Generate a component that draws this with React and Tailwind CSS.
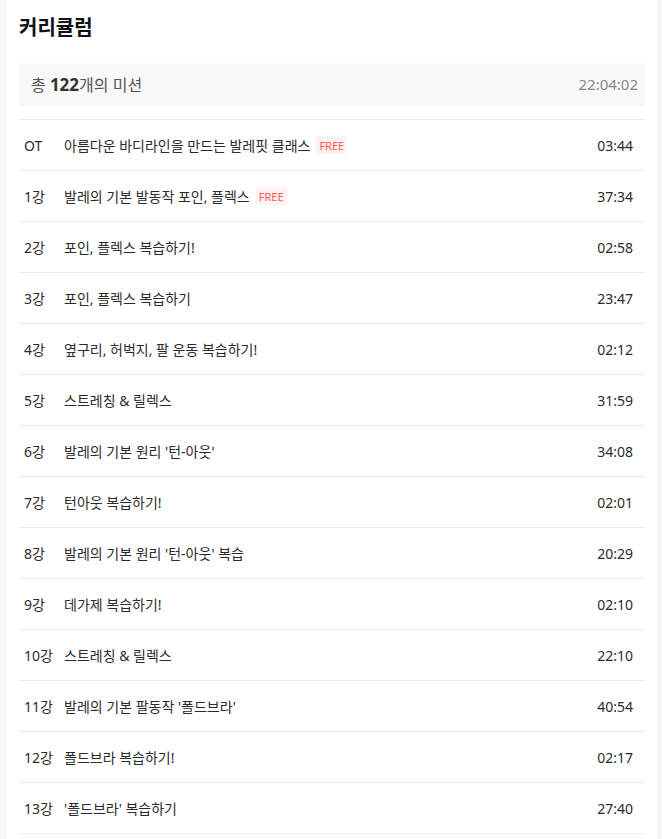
const lessons = [
  { no: 'OT', title: '아름다운 바디라인을 만드는 발레핏 클래스', free: true, time: '03:44' },
  { no: '1강', title: '발레의 기본 발동작 포인, 플렉스', free: true, time: '37:34' },
  { no: '2강', title: '포인, 플렉스 복습하기!', time: '02:58' },
  { no: '3강', title: '포인, 플렉스 복습하기', time: '23:47' },
  { no: '4강', title: '옆구리, 허벅지, 팔 운동 복습하기!', time: '02:12' },
  { no: '5강', title: '스트레칭 & 릴렉스', time: '31:59' },
  { no: '6강', title: "발레의 기본 원리 '턴-아웃'", time: '34:08' },
  { no: '7강', title: '턴아웃 복습하기!', time: '02:01' },
  { no: '8강', title: "발레의 기본 원리 '턴-아웃' 복습", time: '20:29' },
  { no: '9강', title: '데가제 복습하기!', time: '02:10' },
  { no: '10강', title: '스트레칭 & 릴렉스', time: '22:10' },
  { no: '11강', title: "발레의 기본 팔동작 '폴드브라'", time: '40:54' },
  { no: '12강', title: '폴드브라 복습하기!', time: '02:17' },
  { no: '13강', title: "'폴드브라' 복습하기", time: '27:40' },
];

export default function App() {
  return (
    <div
      className="min-h-[839px] bg-[#f7f7f7] pl-[6px] pr-[5px]"
      style={{ fontFamily: '"Noto Sans", "Noto Sans CJK KR", sans-serif' }}
    >
      <div className="bg-white pl-[13px] pr-[12px] pt-[14px] min-h-[839px]">
        {/* Header */}
        <h2 className="text-[20px] font-bold text-[#111] leading-[28px]">커리큘럼</h2>

        <div className="mt-[21px] h-[43px] bg-[#f8f8f8] flex items-center justify-between pl-[12px] pr-[7px]">
          <span className="text-[16px] text-[#555]">
            총 <b className="text-[17px] font-bold text-[#333]">122</b>개의 미션
          </span>
          <span className="text-[15px] text-[#888]">22:04:02</span>
        </div>

        {/* Lesson list */}
        <ul className="mt-[13px] border-t border-[#ececec]">
          {lessons.map((l) => (
            <li
              key={l.no}
              className="h-[51px] flex items-center border-b border-[#ececec] pl-[5px] pr-[12px] text-[14px] text-[#2b2b2b]"
            >
              <span className="w-[40px] shrink-0">{l.no}</span>
              <span className="flex-1 flex items-center gap-[6px]">
                {l.title}
                {l.free && (
                  <span className="text-[11px] leading-none text-[#ff5a5a] bg-[#fff0f1] px-[3px] py-[3px]">FREE</span>
                )}
              </span>
              <span>{l.time}</span>
            </li>
          ))}
        </ul>
      </div>
    </div>
  );
}
